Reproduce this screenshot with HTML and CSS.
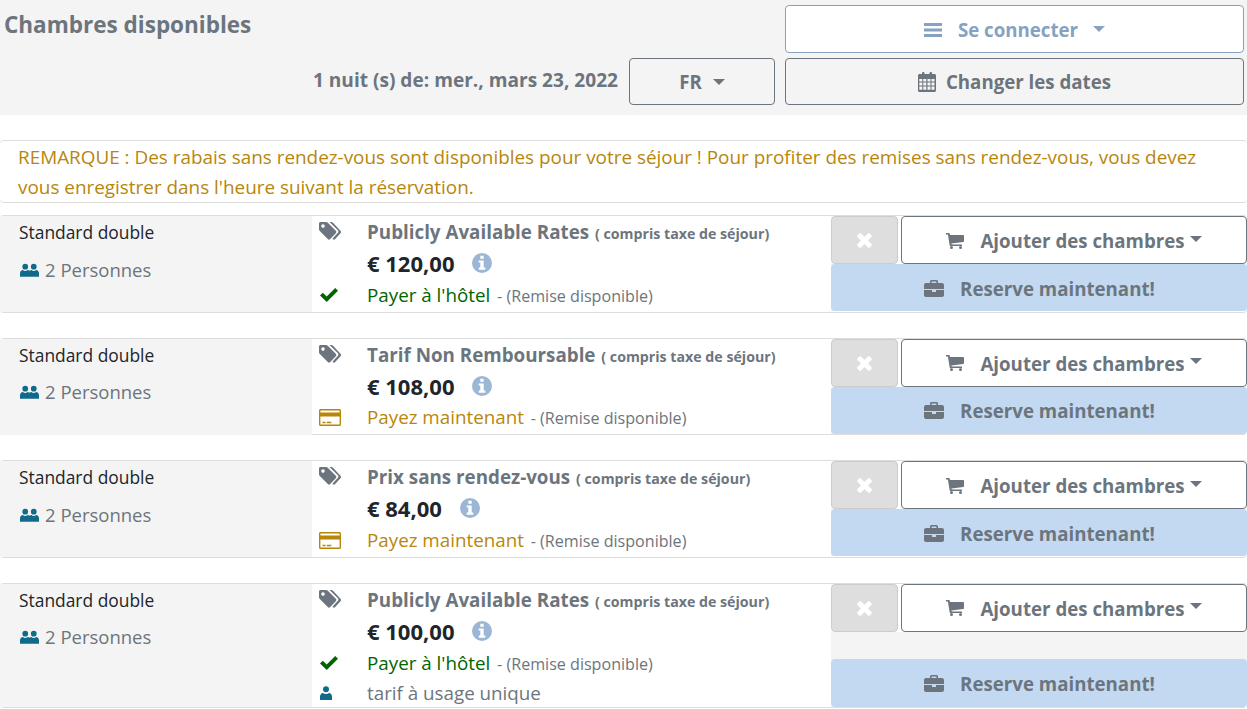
FILE: index.html
```html
<!DOCTYPE html>
<html lang="fr">
<head>
    <meta charset="UTF-8">
    <title>Chambres disponibles</title>
    <link rel="stylesheet" href="styles.css">
</head>
<body>
    <svg class="sprite" width="0" height="0" aria-hidden="true">
        <symbol id="i-bars" viewBox="0 0 18 16"><path d="M0 1h18v3H0zM0 6.500h18v3H0zM0 12h18v3H0z"/></symbol>
        <symbol id="i-calendar" viewBox="0 0 18 20"><path fill-rule="evenodd" d="M3 2h1V1.200C4 .5 4.500 0 5.200 0s1.300.5 1.300 1.200V2h5V1.200C11.500.5 12 0 12.800 0S14 .5 14 1.200V2h2.500C17.300 2 18 2.700 18 3.500v15c0 .8-.7 1.500-1.500 1.500h-15C.7 20 0 19.300 0 18.500v-15C0 2.700.7 2 1.500 2zM1.300 7v2.500h3V7zm4 0v2.500h3V7zm4.200 0v2.500h3V7zm4 0v2.500h3V7zm-12.200 3.500v3h3v-3zm4 0v3h3v-3zm4.200 0v3h3v-3zm4 0v3h3v-3zm-12.200 4v3.200h3v-3.200zm4 0v3.200h3v-3.200zm4.200 0v3.200h3v-3.200zm4 0v3.200h3v-3.200z"/></symbol>
        <symbol id="i-tags" viewBox="0 0 22 18"><path fill-rule="evenodd" d="M1.500 0H7c.7 0 1.300.3 1.800.8l8 8c.7.7.7 1.700 0 2.400l-5.600 5.900c-.7.7-1.700.7-2.400 0l-8-8.100C.3 8.500 0 7.800 0 7.200V1.500C0 .7.700 0 1.500 0zM4 2.300a1.800 1.800 0 1 0 0 3.600 1.800 1.800 0 0 0 0-3.600z"/><path d="M10.500 0h1.700c.7 0 1.300.3 1.800.8l7.500 8c.7.7.7 1.700 0 2.400l-5.300 5.900c-.7.7-1.700.7-2.400 0l-.4-.4 5.500-6c.7-.7.7-1.700 0-2.400z"/></symbol>
        <symbol id="i-users" viewBox="0 0 20 14"><circle cx="5.500" cy="3.500" r="3"/><circle cx="14.500" cy="3.500" r="3"/><path d="M0 14v-3.500C0 8.500 1.500 7 3 7c.7.600 1.500 1 2.500 1S7.300 7.600 8 7c.7 0 1.400.3 2 .9.600-.6 1.300-.9 2-.9.700.6 1.500 1 2.500 1s1.800-.4 2.500-1c1.500 0 3 1.500 3 3.500V14z"/></symbol>
        <symbol id="i-user" viewBox="0 0 12 14"><circle cx="6" cy="3.300" r="3"/><path d="M0 14v-3C0 8.500 1.500 7 3 7c.8.600 1.800 1 3 1s2.200-.4 3-1c1.500 0 3 1.500 3 4v3z"/></symbol>
        <symbol id="i-check" viewBox="0 0 18 14"><path d="M0 7.500L2.800 4.700 6.700 8.600 15.200 0 18 2.800 6.700 14z"/></symbol>
        <symbol id="i-card" viewBox="0 0 22 17"><path fill-rule="evenodd" d="M1.500 0h19c.8 0 1.500.7 1.500 1.500v14c0 .8-.7 1.500-1.500 1.500h-19C.7 17 0 16.300 0 15.500v-14C0 .7.700 0 1.500 0zM1.400 7.500v7.700c0 .3.200.4.400.4h18.400c.2 0 .4-.1.400-.4V7.500zm2.100 5.300h3v1.400h-3zm4.300 0h4.500v1.400H7.800zM1.400 3.400h19.200V1.800c0-.2-.2-.4-.4-.4H1.800c-.2 0-.4.200-.4.400z"/></symbol>
        <symbol id="i-info" viewBox="0 0 20 20"><path fill-rule="evenodd" d="M10 0a10 10 0 1 1 0 20 10 10 0 0 1 0-20zM8.300 2.800v2.900h3.400V2.800zM6.700 7.500v2h1.600v5H6.700v2.300h6.600v-2.300h-1.600V7.500z"/></symbol>
        <symbol id="i-times" viewBox="0 0 14 14"><path d="M3.800.5L7 3.700 10.200.5c.5-.5 1.300-.5 1.800 0L13.500 2c.5.5.5 1.300 0 1.800L10.300 7l3.200 3.200c.5.5.5 1.300 0 1.800L12 13.500c-.5.5-1.300.5-1.800 0L7 10.300l-3.200 3.200c-.5.5-1.300.5-1.800 0L.5 12c-.5-.5-.5-1.300 0-1.800L3.700 7 .5 3.800C0 3.300 0 2.500.5 2L2 .5c.5-.5 1.300-.5 1.800 0z"/></symbol>
        <symbol id="i-cart" viewBox="0 0 18 16"><path d="M0 0h3c.4 0 .6.200.7.600L4 2h13.200c.5 0 .8.300.8.800v5.500c0 .4-.3.700-.7.800L5.400 10.500l.2 1H16v1.500H4.400c-.3 0-.6-.2-.7-.6L1.900 1.500H0z"/><circle cx="5.500" cy="14.500" r="1.500"/><circle cx="14.500" cy="14.500" r="1.500"/></symbol>
        <symbol id="i-case" viewBox="0 0 20 17"><path fill-rule="evenodd" d="M6 3V1.500C6 .7 6.700 0 7.500 0h5c.8 0 1.500.7 1.500 1.500V3h4c1.100 0 2 .9 2 2v4H0V5c0-1.100.9-2 2-2zm1.600 0h4.800V1.600H7.600z"/><path d="M0 10h8v2h4v-2h8v5c0 1.100-.9 2-2 2H2c-1.100 0-2-.9-2-2z"/></symbol>
    </svg>

    <header class="top">
        <h1 class="top-title">Chambres disponibles</h1>
        <button class="btn btn-login" type="button">
            <svg class="ico ico-bars"><use href="#i-bars"/></svg>
            <span>Se connecter</span>
            <span class="caret caret-login"></span>
        </button>
        <div class="top-dates">1 nuit (s) de: mer., mars 23, 2022</div>
        <button class="btn btn-lang" type="button">FR <span class="caret caret-lang"></span></button>
        <button class="btn btn-dates" type="button">
            <svg class="ico ico-calendar"><use href="#i-calendar"/></svg>
            <span>Changer les dates</span>
        </button>
    </header>

    <p class="notice">REMARQUE : Des rabais sans rendez-vous sont disponibles pour votre séjour ! Pour profiter des remises sans rendez-vous, vous devez vous enregistrer dans l'heure suivant la réservation.</p>

    <div id="rooms"></div>

    <script>
        const rates = [
            { title: "Publicly Available Rates", price: "€ 120,00", pay: "hotel" },
            { title: "Tarif Non Remboursable", price: "€ 108,00", pay: "now" },
            { title: "Prix sans rendez-vous", price: "€ 84,00", pay: "now" },
            { title: "Publicly Available Rates", price: "€ 100,00", pay: "hotel", single: true }
        ];

        const list = document.getElementById('rooms');

        rates.forEach(rate => {
            const row = document.createElement('section');
            row.className = rate.single ? 'room room-tall' : 'room';
            const payLine = rate.pay === 'hotel'
                ? `<svg class="ico ico-check"><use href="#i-check"/></svg><div class="pay pay-hotel">Payer à l'hôtel <small>- (Remise disponible)</small></div>`
                : `<svg class="ico ico-card"><use href="#i-card"/></svg><div class="pay pay-now">Payez maintenant <small>- (Remise disponible)</small></div>`;
            const singleLine = rate.single
                ? `<svg class="ico ico-user"><use href="#i-user"/></svg><div class="pay pay-single">tarif à usage unique</div>`
                : '';
            row.innerHTML = `
                <div class="room-info">
                    <div class="room-name">Standard double</div>
                    <div class="room-size"><svg class="ico ico-users"><use href="#i-users"/></svg>2 Personnes</div>
                </div>
                <div class="room-rate">
                    <svg class="ico ico-tags"><use href="#i-tags"/></svg>
                    <div class="rate-title">${rate.title} <small>( compris taxe de séjour)</small></div>
                    <div class="rate-price">${rate.price}<svg class="ico ico-info"><use href="#i-info"/></svg></div>
                    ${payLine}
                    ${singleLine}
                </div>
                <div class="room-actions">
                    <div class="actions-top">
                        <button class="btn btn-clear" type="button"><svg class="ico ico-times"><use href="#i-times"/></svg></button>
                        <button class="btn btn-add" type="button">
                            <svg class="ico ico-cart"><use href="#i-cart"/></svg>
                            <span>Ajouter des chambres</span>
                            <span class="caret caret-add"></span>
                        </button>
                    </div>
                    <button class="btn btn-book" type="button">
                        <svg class="ico ico-case"><use href="#i-case"/></svg>
                        <span>Reserve maintenant!</span>
                    </button>
                </div>
            `;
            list.appendChild(row);
        });
    </script>
</body>
</html>
```

FILE: styles.css
```css
body {
    margin: 0;
    font-family: "Open Sans", sans-serif;
    color: #6c757d;
    background: #fff;
}
.sprite {
    display: block;
    height: 0;
}
.ico {
    display: block;
    fill: currentColor;
    flex: none;
}

/* top bar */
.top {
    display: grid;
    grid-template-columns: 1fr 146px 459px;
    grid-template-rows: 48px 47px;
    column-gap: 10px;
    row-gap: 5px;
    height: 115px;
    box-sizing: border-box;
    padding: 5px 3px 0 0;
    background: #f4f4f4;
}
.top-title {
    grid-column: 1 / 3;
    margin: 0;
    padding-left: 4px;
    font-size: 22.500px;
    line-height: 40px;
    font-weight: 700;
}
.top-dates {
    text-align: right;
    padding-right: 1px;
    font-size: 19.100px;
    font-weight: 700;
    line-height: 44px;
}
.btn {
    display: flex;
    align-items: center;
    justify-content: center;
    margin: 0;
    padding: 0;
    font-family: inherit;
    font-size: 18.700px;
    font-weight: 700;
    color: #6c757d;
    background: transparent;
    border: 1px solid #6c757d;
    border-radius: 4px;
}
.caret {
    display: block;
    width: 0;
    height: 0;
    border-style: solid;
    border-color: currentColor transparent transparent;
    border-width: 6px 6px 0;
}
.btn-login {
    color: #86a2c0;
    background: #fff;
    border-color: #86a2c0;
    padding-top: 1px;
}
.ico-bars {
    width: 18px;
    height: 16px;
    margin-right: 16px;
}
.caret-login {
    margin: -2px 0 0 15px;
}
.caret-lang {
    margin-left: 11px;
}
.ico-calendar {
    width: 18px;
    height: 20px;
    margin-right: 10px;
}

/* notice */
.notice {
    margin: 25px 0 12px;
    height: 60px;
    padding: 1px 30px 0 18px;
    font-size: 18.900px;
    line-height: 30px;
    color: #b8860b;
    border: 1px solid #ddd;
    border-width: 1px 0;
    border-radius: 4px;
}

/* room rows */
.room {
    display: grid;
    grid-template-columns: 312px 519px 416px;
    height: 97.670px;
    box-sizing: border-box;
    margin-bottom: 25px;
    border-top: 1px solid #ddd;
    border-bottom: 1px solid #ddd;
    border-radius: 4px;
}
.room-tall {
    height: 125px;
    margin-bottom: 0;
}
.room-info {
    padding: 4px 19px 0;
    background: #f4f4f4;
}
.room-name {
    font-size: 17.400px;
    line-height: 24px;
    font-weight: 500;
    color: #212529;
}
.room-size {
    display: flex;
    align-items: center;
    margin-top: 13.500px;
    font-size: 18.500px;
    line-height: 24px;
}
.ico-users {
    width: 19px;
    height: 14px;
    margin: 0 6px 0 1px;
    color: #0f6a8b;
}
.room-rate {
    display: grid;
    grid-template-columns: 55px 1fr;
    grid-template-rows: 31px 30.700px 33px;
    grid-auto-rows: 28px;
    align-items: center;
    padding-top: .6px;
}
.ico-tags {
    width: 22px;
    height: 18px;
    margin: -2px 0 0 7px;
}
.rate-title {
    font-size: 18.800px;
    font-weight: 700;
}
.rate-title small {
    margin-left: 1px;
    font-size: 14.200px;
}
.rate-price {
    grid-column: 2;
    display: flex;
    align-items: center;
    font-size: 22px;
    font-weight: 700;
    color: #212529;
}
.ico-info {
    width: 20px;
    height: 20px;
    margin-left: 18px;
    color: #9cb7d6;
}
.ico-check {
    width: 18px;
    height: 14px;
    margin: 1px 0 0 8px;
    color: #006400;
}
.ico-card {
    width: 22px;
    height: 17px;
    margin-left: 7px;
    color: #b8860b;
}
.ico-user {
    width: 12px;
    height: 14px;
    margin-left: 8px;
    color: #0f6a8b;
}
.pay {
    font-size: 18.800px;
}
.pay small {
    margin-left: 2px;
    font-size: 16.100px;
    color: #6c757d;
}
.pay-hotel {
    color: #006400;
}
.pay-now {
    color: #b8860b;
}
.room-actions {
    display: flex;
    flex-direction: column;
    justify-content: space-between;
    margin-bottom: 1px;
    background: #f4f4f4;
}
.actions-top {
    display: flex;
    gap: 3px;
    background: #fff;
}
.btn-clear {
    width: 67px;
    height: 48px;
    padding-top: 1px;
    background: #dedede;
    border-color: #ccc;
    color: #fff;
}
.ico-times {
    width: 15px;
    height: 15px;
}
.btn-add {
    flex: 1;
    height: 48px;
    background: #fff;
    padding: 1px 2px 0 2px;
}
.ico-cart {
    width: 18px;
    height: 16px;
    margin-right: 16px;
}
.caret-add {
    margin: -4px 0 0 5px;
}
.btn-book {
    flex: none;
    height: 47px;
    padding: 1px 0 0 1px;
    background: #c3d9f1;
    border: none;
}
.ico-case {
    width: 20px;
    height: 17px;
    margin-right: 16px;
}
.room-tall .room-actions {
    margin-bottom: 0;
}
.room-tall .btn-book {
    height: 48px;
}
```
